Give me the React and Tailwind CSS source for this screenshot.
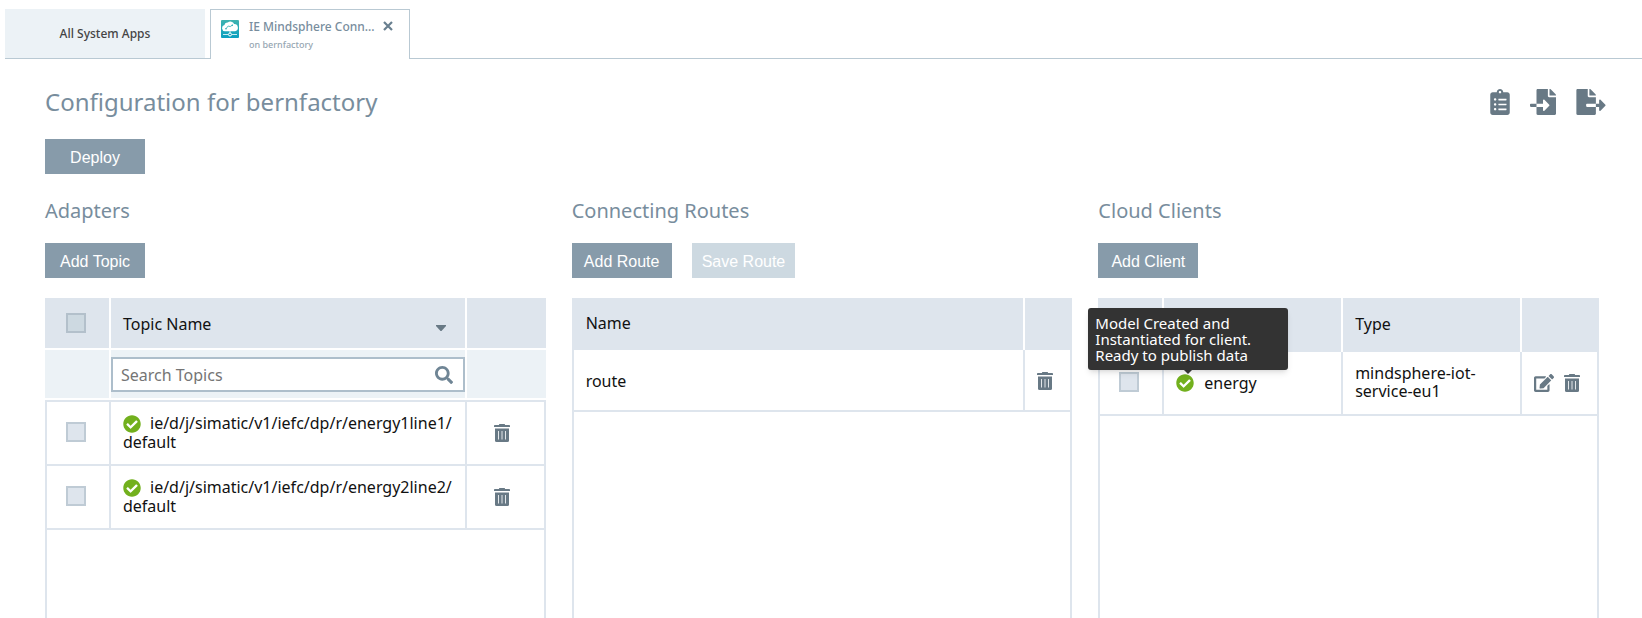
import React from "react";
import {
  FaClipboardList,
  FaFileImport,
  FaFileExport,
  FaSearch,
  FaCheckCircle,
  FaEdit,
} from "react-icons/fa";

const sans = "font-['Noto_Sans',sans-serif]";

function TrashIcon() {
  return (
    <svg width="16" height="18" viewBox="0 0 16 18" aria-hidden="true">
      <path d="M5 .6Q5 0 5.600 0h4.800q.6 0 .6.600V1h4.200q.8 0 .8.800V3H0V1.800Q0 1 .8 1H5z" fill="#687985" />
      <path d="M1 4.500h14v12a1.500 1.500 0 0 1-1.500 1.500h-11A1.500 1.500 0 0 1 1 16.500z" fill="#687985" />
      <path d="M4.500 7v8.500M8 7v8.500M11.500 7v8.500" stroke="#e3e7ea" strokeWidth="1" />
    </svg>
  );
}

function AppLogo() {
  return (
    <svg width="18" height="18" viewBox="0 0 18 18" className="shrink-0" aria-hidden="true">
      <defs>
        <linearGradient id="logo" x1="0" y1="0" x2="0" y2="1">
          <stop offset="0" stopColor="#3fb3b0" />
          <stop offset="1" stopColor="#0a9fc0" />
        </linearGradient>
      </defs>
      <rect width="18" height="18" rx="1" fill="url(#logo)" />
      <path
        d="M4 11.200a3.100 3.100 0 0 1-.6-6.100A3 3 0 0 1 6.800 2.600a3.900 3.900 0 0 1 6.300 1.500 3.600 3.600 0 0 1 1 7.100z"
        fill="#fff"
      />
      <path d="M5 8.700 7.200 6l2 .6L11.500 5" fill="none" stroke="#2aaab4" strokeWidth=".8" />
      <circle cx="5" cy="8.700" r=".8" fill="#2aaab4" />
      <circle cx="11.300" cy="5.200" r=".7" fill="#2aaab4" />
      <path d="M2 14.500h5M11 14.500h5M9 11v2" stroke="#c9ecf2" strokeWidth="1" />
      <circle cx="9" cy="14.500" r="1.500" fill="none" stroke="#fff" strokeWidth="1" />
    </svg>
  );
}

function ActionButton({ children, disabled }) {
  return (
    <button
      type="button"
      disabled={disabled}
      className="h-[35px] min-w-[100px] bg-[#879baa] px-[10px] pt-[3px] font-['Liberation_Sans',sans-serif] text-base text-white disabled:bg-[#cdd9e1]"
    >
      {children}
    </button>
  );
}

function Check({ label, head }) {
  return (
    <input
      type="checkbox"
      aria-label={label}
      className={
        head
          ? "block size-5 appearance-none border-2 border-[#b3c0cb] bg-[#cdd9e1]"
          : "block size-5 appearance-none border-2 border-[#bfcbd5] bg-[#dee5ed]"
      }
    />
  );
}

function IconButton({ label, children }) {
  return (
    <button type="button" aria-label={label} className="block text-[#687985]">
      {children}
    </button>
  );
}

function Panel({ title, actions, children }) {
  return (
    <section className="flex min-w-0 flex-col">
      <h2 className="text-xl leading-7 text-[#788d9d]">{title}</h2>
      <div className="mt-[18px] mb-5 flex gap-5">{actions}</div>
      {children}
      <div className="min-h-16 flex-1 border-x-2 border-[#dee5ed]" />
    </section>
  );
}

const table = "w-full table-fixed border-separate border-spacing-0 text-left text-base leading-[18px] text-[#111]";
const th = "bg-[#dee5ed] border-white font-normal";
const td = "border-[#dee5ed] border-b-2 border-r-2";

const topics = [
  "ie/d/j/simatic/v1/iefc/dp/r/energy1line1/ default",
  "ie/d/j/simatic/v1/iefc/dp/r/energy2line2/ default",
];

function TopicsTable() {
  return (
    <table className={table}>
      <colgroup>
        <col className="w-[66px]" />
        <col />
        <col className="w-[79px]" />
      </colgroup>
      <thead>
        <tr className="h-[52px]">
          <th className={`${th} border-r-2 border-b-2 pl-[21px]`}>
            <Check head label="Select all topics" />
          </th>
          <th className={`${th} border-r-2 border-b-2 pt-0.5 pl-3`}>
            <div className="flex items-center justify-between pr-[19px]">
              Topic Name
              <svg width="10" height="6" viewBox="0 0 10 6" className="mt-2" aria-hidden="true">
                <path d="M0 0h10v1L5.500 6h-1L0 1z" fill="#687985" />
              </svg>
            </div>
          </th>
          <th className={`${th} border-b-2`} />
        </tr>
        <tr className="h-[50px]">
          <th className="border-r-2 border-b-2 border-white bg-[#ecf2f6]" />
          <th className="border-r-2 border-b-2 border-white bg-[#ecf2f6] font-normal">
            <label className="flex h-[35px] items-center border-2 border-[#adbecb] bg-white pt-0.5 pr-[10px] pl-2">
              <input
                type="text"
                aria-label="Search Topics"
                placeholder="Search Topics"
                className="min-w-0 flex-1 bg-transparent outline-none placeholder:text-[#757575]"
              />
              <FaSearch size={18} color="#6f8595" />
            </label>
          </th>
          <th className="border-b-2 border-white bg-[#ecf2f6]" />
        </tr>
      </thead>
      <tbody>
        {topics.map((topic, i) => (
          <tr key={topic} className={i === 0 ? "h-[66px] *:border-t-2" : "h-16"}>
            <td className={`${td} border-l-2 pb-0.5 pl-[19px]`}>
              <Check label={`Select topic ${i + 1}`} />
            </td>
            <td className={`${td} pb-0.5 pl-3`}>
              <FaCheckCircle size={18} color="#72b01d" className="mr-[9px] inline-block align-[-4px]" />
              {topic}
            </td>
            <td className={`${td} pl-[27px]`}>
              <IconButton label="Delete topic">
                <TrashIcon />
              </IconButton>
            </td>
          </tr>
        ))}
      </tbody>
    </table>
  );
}

function RoutesTable() {
  return (
    <table className={table}>
      <colgroup>
        <col />
        <col className="w-[47px]" />
      </colgroup>
      <thead>
        <tr className="h-[52px]">
          <th className={`${th} border-r-2 pb-0.5 pl-[14px]`}>Name</th>
          <th className={th} />
        </tr>
      </thead>
      <tbody>
        <tr className="h-[62px]">
          <td className={`${td} border-l-2 pt-0.5 pl-3`}>route</td>
          <td className={`${td} pt-0.5 pl-3`}>
            <IconButton label="Delete route">
              <TrashIcon />
            </IconButton>
          </td>
        </tr>
      </tbody>
    </table>
  );
}

function StatusWithTooltip() {
  return (
    <span className="relative inline-block">
      <FaCheckCircle size={18} color="#72b01d" />
      <span
        role="tooltip"
        className="absolute bottom-[22px] -left-[88px] w-[200px] rounded-[3px] bg-[#333] px-[7px] py-[7px] text-[15px] leading-4 text-white shadow-md"
      >
        Model Created and Instantiated for client. Ready to publish data
        <span className="absolute top-full left-1/2 -ml-1 border-x-4 border-t-4 border-x-transparent border-t-[#333]" />
      </span>
    </span>
  );
}

function ClientsTable() {
  return (
    <table className={table}>
      <colgroup>
        <col className="w-[66px]" />
        <col />
        <col />
        <col className="w-[77px]" />
      </colgroup>
      <thead>
        <tr className="h-[54px]">
          <th className={`${th} border-r-2`} />
          <th className={`${th} border-r-2`} />
          <th className={`${th} border-r-2 pb-0.5 pl-3`}>Type</th>
          <th className={th} />
        </tr>
      </thead>
      <tbody>
        <tr className="h-16">
          <td className={`${td} border-l-2 pb-0.5 pl-[19px]`}>
            <Check label="Select client energy" />
          </td>
          <td className={`${td} pl-3`}>
            <div className="flex items-center gap-[10px]">
              <StatusWithTooltip />
              energy
            </div>
          </td>
          <td className={`${td} pb-0.5 pl-3`}>mindsphere-iot-service-eu1</td>
          <td className={`${td} pl-3`}>
            <div className="flex items-center gap-[10px]">
              <IconButton label="Edit client">
                <FaEdit size={20} />
              </IconButton>
              <IconButton label="Delete client">
                <TrashIcon />
              </IconButton>
            </div>
          </td>
        </tr>
      </tbody>
    </table>
  );
}

export default function App() {
  return (
    <div className={`flex min-h-screen flex-col bg-white ${sans}`}>
      <nav className="flex pt-[9px] pl-[5px]">
        <a
          href="#apps"
          className="flex h-[50px] w-[200px] items-center justify-center border-b border-[#b9c9d3] bg-[#ecf2f6] text-xs font-medium text-[#444]"
        >
          All System Apps
        </a>
        <div className="w-[5px] border-b border-[#b9c9d3]" />
        <div className="flex h-[50px] w-[200px] border-x border-t border-[#b9c9d3] pt-[10px] pl-[10px]">
          <AppLogo />
          <a href="#mindsphere" className="ml-[10px] block w-[126px] whitespace-nowrap">
            <span className="block text-xs leading-[14px] font-medium text-[#788d9d]">IE Mindsphere Conn...</span>
            <span className="mt-1 block text-[9px] leading-[14px] font-medium text-[#96a6b2]">on bernfactory</span>
          </a>
          <button type="button" aria-label="Close tab" className="ml-2 h-3">
            <svg width="10" height="10" viewBox="0 0 10 10" aria-hidden="true">
              <path d="M1 1l8 8M9 1l-8 8" stroke="#687f8f" strokeWidth="2.200" />
            </svg>
          </button>
        </div>
        <div className="flex-1 border-b border-[#b9c9d3]" />
      </nav>

      <main className="flex flex-1 flex-col pr-[43px] pl-[45px]">
        <header className="mt-[27px] flex items-start justify-between">
          <h1 className="text-2xl leading-8 text-[#788d9d]">Configuration for bernfactory</h1>
          <div className="-mr-[7px] flex gap-5 pt-[3px]">
            <IconButton label="Show log">
              <FaClipboardList className="h-[26px] w-5" />
            </IconButton>
            <IconButton label="Import configuration">
              <FaFileImport className="size-[26px]" />
            </IconButton>
            <IconButton label="Export configuration">
              <FaFileExport className="h-[26px] w-[30px]" />
            </IconButton>
          </div>
        </header>
        <div className="mt-[21px]">
          <ActionButton>Deploy</ActionButton>
        </div>
        <div className="mt-[23px] grid flex-1 grid-cols-3 gap-[26px]">
          <Panel title="Adapters" actions={<ActionButton>Add Topic</ActionButton>}>
            <TopicsTable />
          </Panel>
          <Panel
            title="Connecting Routes"
            actions={
              <>
                <ActionButton>Add Route</ActionButton>
                <ActionButton disabled>Save Route</ActionButton>
              </>
            }
          >
            <RoutesTable />
          </Panel>
          <Panel title="Cloud Clients" actions={<ActionButton>Add Client</ActionButton>}>
            <ClientsTable />
          </Panel>
        </div>
      </main>
    </div>
  );
}
